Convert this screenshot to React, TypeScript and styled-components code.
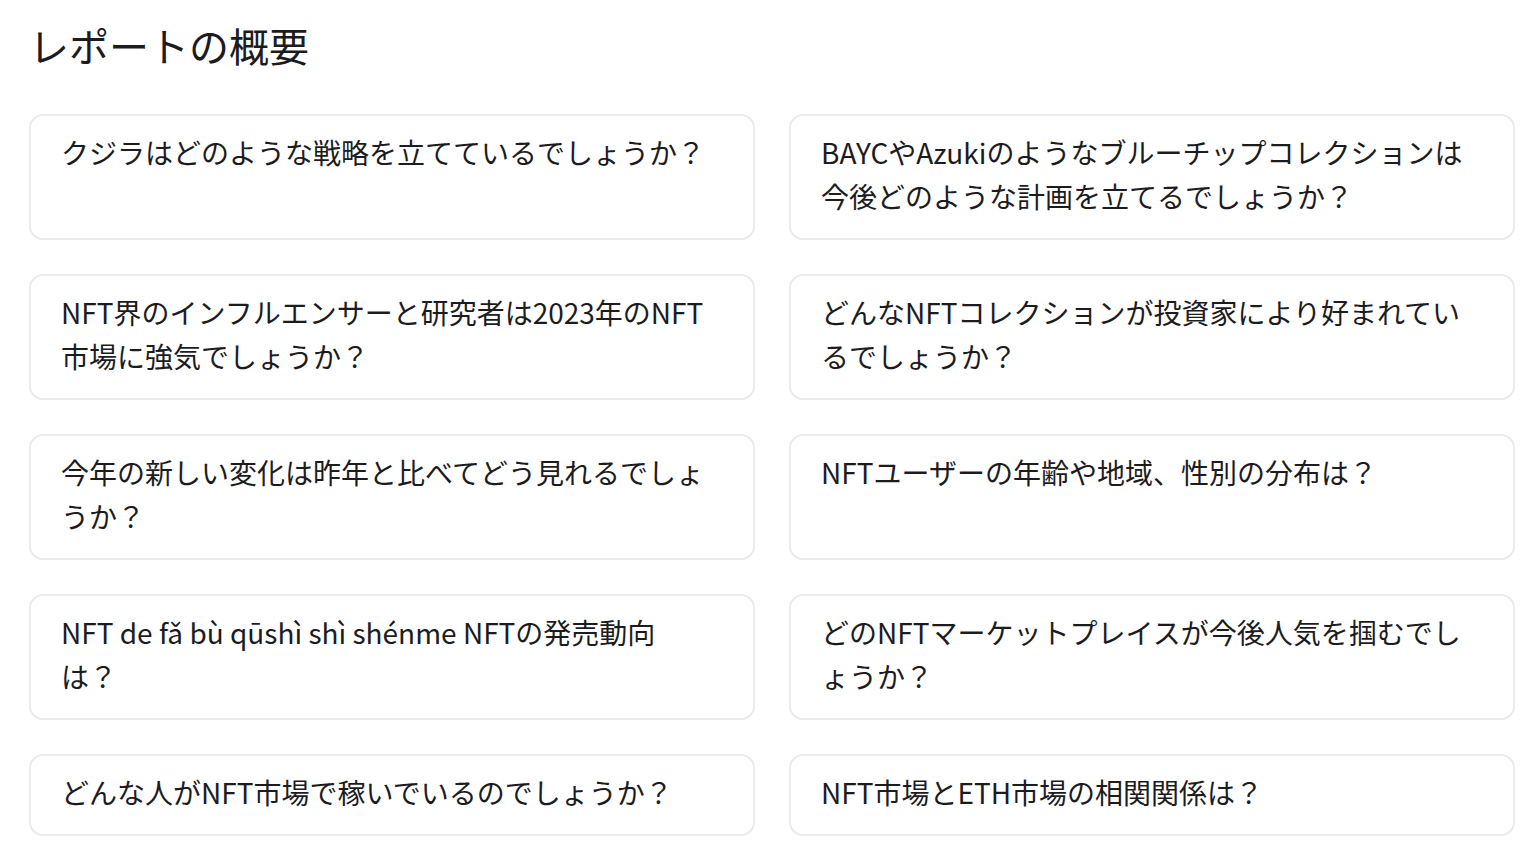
import React from "react";
import styled, { createGlobalStyle } from "styled-components";

const questions: string[][] = [
  ["クジラはどのような戦略を立てているでしょうか？"],
  ["BAYCやAzukiのようなブルーチップコレクションは", "今後どのような計画を立てるでしょうか？"],
  ["NFT界のインフルエンサーと研究者は2023年のNFT", "市場に強気でしょうか？"],
  ["どんなNFTコレクションが投資家により好まれてい", "るでしょうか？"],
  ["今年の新しい変化は昨年と比べてどう見れるでしょ", "うか？"],
  ["NFTユーザーの年齢や地域、性別の分布は？"],
  ["NFT de fǎ bù qūshì shì shénme NFTの発売動向", "は？"],
  ["どのNFTマーケットプレイスが今後人気を掴むでし", "ょうか？"],
  ["どんな人がNFT市場で稼いでいるのでしょうか？"],
  ["NFT市場とETH市場の相関関係は？"],
];

const App = () => {
  return (
    <>
      <GlobalStyle />
      <Page>
        <Title>レポートの概要</Title>
        <Grid>
          {questions.map((lines, i) => (
            <Card key={i}>
              <Question>
                {lines.map((line, j) => (
                  <React.Fragment key={j}>
                    {j > 0 && <br />}
                    {line}
                  </React.Fragment>
                ))}
              </Question>
            </Card>
          ))}
        </Grid>
      </Page>
    </>
  );
};

export default App;

const GlobalStyle = createGlobalStyle`
    html, body {
        margin: 0;
        padding: 0;
        background: #ffffff;
    }
    body {
        font-family: "Noto Sans CJK JP", sans-serif;
        color: #1c1c1f;
    }
`;

const Page = styled.div`
    padding: 18px 9px 22px 29px;
`;

const Title = styled.h1`
    margin: 0 0 42px 0;
    font-family: "Noto Sans CJK JP", sans-serif;
    font-size: 40px;
    font-weight: 400;
    line-height: 54px;
    color: #1c1c1f;
`;

const Grid = styled.div`
    display: grid;
    grid-template-columns: 726px 726px;
    column-gap: 34px;
    row-gap: 34px;
`;

const Card = styled.div`
    box-sizing: border-box;
    border: 2px solid #ebebef;
    border-radius: 14px;
    padding: 14px 30px 20px;
    background: #ffffff;
`;

const Question = styled.p`
    margin: 0;
    font-size: 28px;
    font-weight: 400;
    line-height: 44px;
    color: #1c1c1f;
    white-space: nowrap;
`;
